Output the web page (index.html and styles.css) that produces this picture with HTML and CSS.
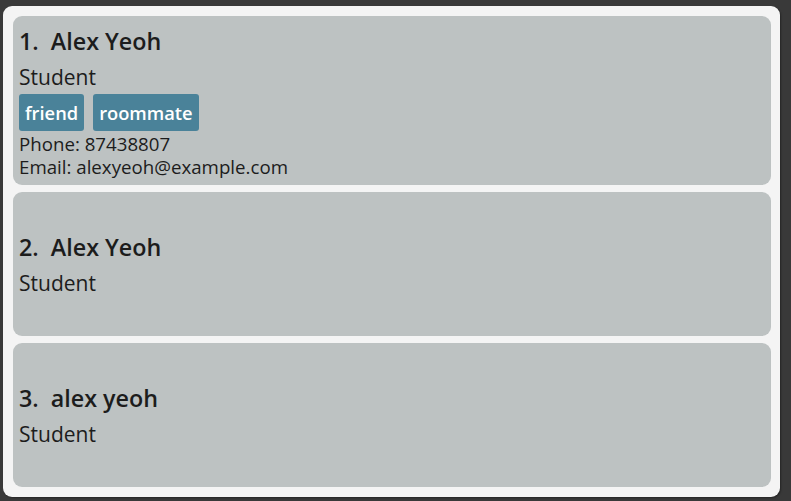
FILE: index.html
```html
<!DOCTYPE html>
<html>
<head>
<meta charset="utf-8">
<link rel="stylesheet" href="styles.css">
</head>
<body>
<div class="panel">
  <div class="card card-full">
    <div class="name">1.&nbsp;&nbsp;Alex Yeoh</div>
    <div class="role">Student</div>
    <div class="tags"><span class="tag">friend</span><span class="tag">roommate</span></div>
    <div class="info info-first">Phone: 87438807</div>
    <div class="info">Email: alexyeoh@example.com</div>
  </div>
  <div class="card card-short">
    <div class="name">2.&nbsp;&nbsp;Alex Yeoh</div>
    <div class="role">Student</div>
  </div>
  <div class="card card-short">
    <div class="name">3.&nbsp;&nbsp;alex yeoh</div>
    <div class="role">Student</div>
  </div>
</div>
</body>
</html>
```
FILE: styles.css
```css
html, body {
  margin: 0;
  padding: 0;
}
body {
  background: #393939;
  width: 791px;
  height: 501px;
  overflow: hidden;
  font-family: "Open Sans", "Noto Sans", sans-serif;
  color: #1c1c1c;
}
.panel {
  margin: 6px 11px 0 3px;
  height: 491px;
  box-sizing: border-box;
  background: #f4f4f4;
  border-radius: 9px;
  padding: 10px 9px 10px 10px;
  display: flex;
  flex-direction: column;
  gap: 7px;
  box-shadow: 1px 1px 2px rgba(0,0,0,0.35);
}
.card {
  background: #bdc2c2;
  border-radius: 9px;
  padding: 0 6px;
  display: flex;
  flex-direction: column;
  justify-content: flex-start;
  box-sizing: border-box;
}
.card-full {
  height: 169px;
  padding-top: 8px;
}
.card-short {
  height: 144px;
  padding-top: 38px;
}
.name {
  font-size: 23.3px;
  font-weight: 600;
  line-height: 34px;
}
.role {
  font-size: 21px;
  line-height: 38px;
}
.tags {
  display: flex;
  gap: 9px;
  margin-top: -2px;
}
.tag {
  background: #4a8299;
  color: #ffffff;
  font-size: 18.3px;
  font-weight: 600;
  line-height: 37px;
  height: 37px;
  padding: 0 6px;
  border-radius: 3px;
}
.info {
  font-size: 18.7px;
  line-height: 23px;
}
.info-first {
  margin-top: 1px;
}
```
